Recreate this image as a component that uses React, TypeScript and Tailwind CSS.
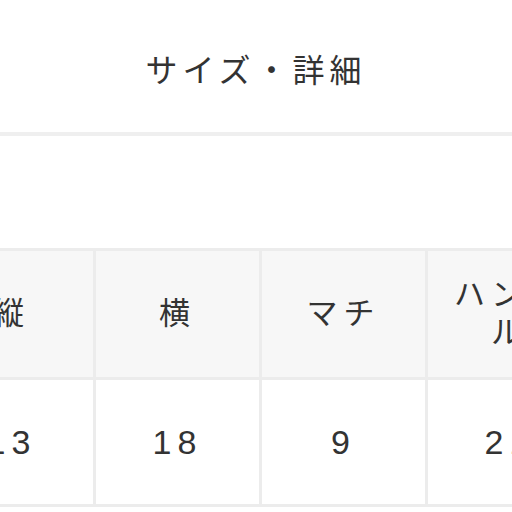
const headers = ["縦", "横", "マチ", "ハンドル"];
const values = ["13", "18", "9", "21"];

const font = { fontFamily: '"Liberation Sans", "Noto Sans CJK JP", sans-serif' };

export default function App() {
  return (
    <div className="w-[512px] h-[512px] overflow-hidden bg-white text-[#333]" style={font}>
      <div className="h-[132px] pt-[47px] flex justify-center">
        <h2 className="text-[32px] leading-[48px] tracking-[5px] font-normal">サイズ・詳細</h2>
      </div>
      <div className="h-[4px] bg-[#efefef]" />
      <div className="h-[112px]" />
      <div className="ml-[-70px] w-[700px]">
        <div className="flex border-t-[3px] border-[#ececec] bg-[#f7f7f7]">
          {headers.map((h) => (
            <div
              key={h}
              className="w-[166px] h-[126px] shrink-0 border-r-[3px] border-[#ececec] flex items-center justify-center px-[14px]"
            >
              <span className="text-[31px] leading-[38px] tracking-[6px] text-center">{h}</span>
            </div>
          ))}
        </div>
        <div className="flex border-t-[3px] border-b-[3px] border-[#ececec] bg-white">
          {values.map((v) => (
            <div
              key={v}
              className="w-[166px] h-[124px] shrink-0 border-r-[3px] border-[#ececec] flex items-center justify-center"
            >
              <span className="text-[34px] leading-[40px] tracking-[6px]">{v}</span>
            </div>
          ))}
        </div>
      </div>
    </div>
  );
}
